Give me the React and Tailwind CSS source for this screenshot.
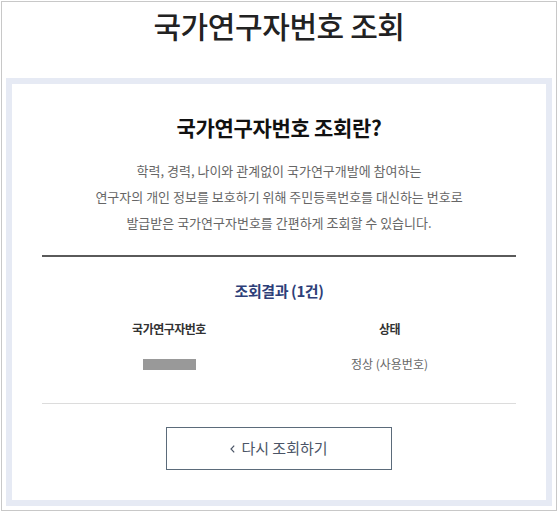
import React from 'react';

export default function App() {
  const font = { fontFamily: '"Noto Sans CJK KR", "Noto Sans", sans-serif' };

  return (
    <div className="w-[558px] h-[512px] p-px bg-white" style={font}>
      <div className="h-full border border-[#c8c8c8] px-[4px] pb-[4px] flex flex-col">
        {/* Page title */}
        <h1 className="mt-[1px] text-center text-[30px] leading-[44px] font-medium text-[#222] tracking-[-0.4px]">
          국가연구자번호 조회
        </h1>

        {/* Panel */}
        <div className="mt-[31px] flex-1 border-[6px] border-[#e6eaf4] bg-white px-[30px] flex flex-col items-center">
          <h2 className="mt-[29px] text-[21px] leading-[28px] font-bold text-[#111] tracking-[-0.3px]">
            국가연구자번호 조회란?
          </h2>

          <div className="mt-[17px] text-center text-[13px] leading-[26px] text-[#666]">
            <p>학력, 경력, 나이와 관계없이 국가연구개발에 참여하는</p>
            <p>연구자의 개인 정보를 보호하기 위해 주민등록번호를 대신하는 번호로</p>
            <p>발급받은 국가연구자번호를 간편하게 조회할 수 있습니다.</p>
          </div>

          <div className="mt-[19px] w-full h-[2px] bg-[#5a5a5a]" />

          <h3 className="mt-[23px] text-[15px] leading-[22px] font-bold text-[#2d3e78] tracking-[-0.4px]">
            조회결과 (1건)
          </h3>

          {/* Result table */}
          <div className="w-full">
            <div className="mt-[18px] flex text-[12px] leading-[18px] font-bold text-[#333] tracking-[-0.5px]">
              <div className="w-[254px] text-center">국가연구자번호</div>
              <div className="w-[187px] text-center">상태</div>
            </div>
            <div className="mt-[17px] flex items-center text-[12px] leading-[18px] text-[#666]">
              <div className="w-[254px] flex justify-center">
                <span className="block w-[53px] h-[11px] bg-[#999]" />
              </div>
              <div className="w-[187px] text-center">정상 (사용번호)</div>
            </div>
          </div>

          <div className="mt-[30px] w-full h-px bg-[#dcdcdc]" />

          <button
            type="button"
            className="mt-[23px] w-[226px] h-[43px] border border-[#5b6b7a] bg-white text-[15px] text-[#4b5567] flex items-center justify-center gap-[6px]"
          >
            <svg width="5" height="8" viewBox="0 0 5 8" fill="none" className="mt-px">
              <path d="M4.2 0.6 L1 4 L4.2 7.4" stroke="#4b5567" strokeWidth="1.2" />
            </svg>
            <span>다시 조회하기</span>
          </button>
        </div>
      </div>
    </div>
  );
}
